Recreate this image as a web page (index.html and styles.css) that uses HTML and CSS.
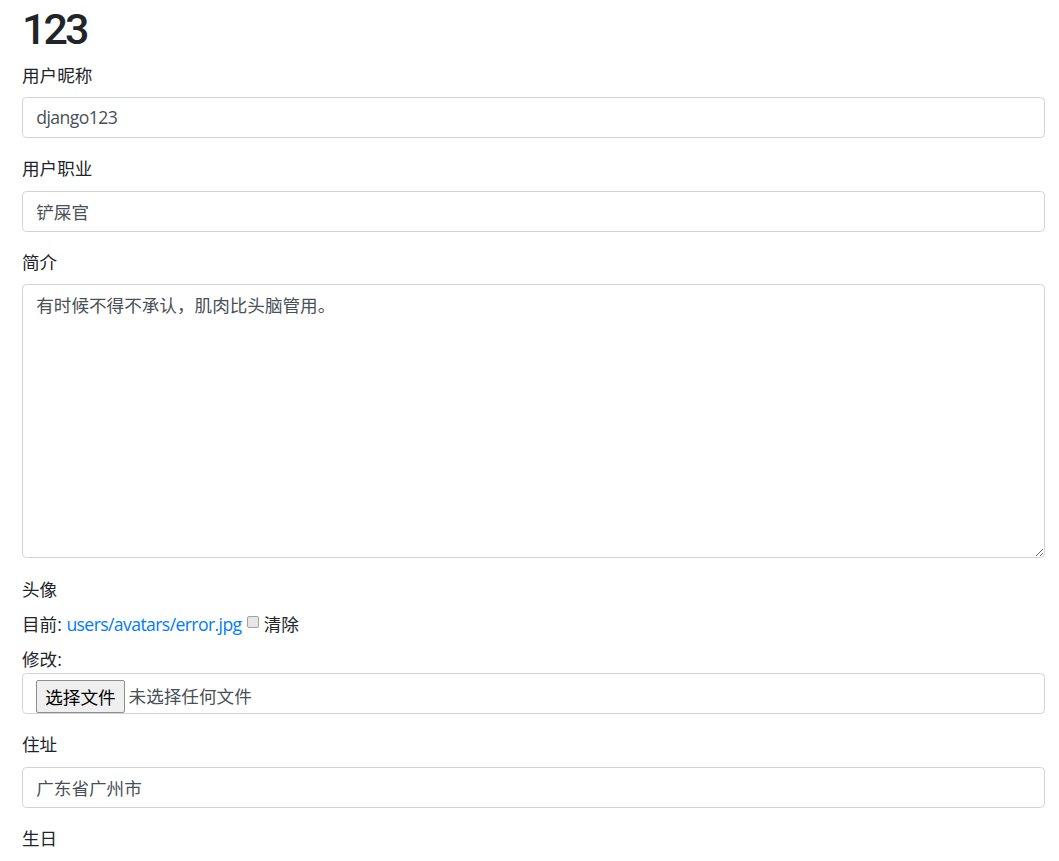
FILE: index.html
```html
<!DOCTYPE html>
<html lang="zh-CN">
<head>
<meta charset="utf-8">
<title>123</title>
<link rel="stylesheet" href="styles.css">
</head>
<body>
<main class="page">
  <h1 class="title">123</h1>
  <form class="profile-form">
    <div class="form-group">
      <label class="form-label" for="nick">用户昵称</label>
      <input class="form-control latin" id="nick" type="text" value="django123">
    </div>
    <div class="form-group">
      <label class="form-label" for="job">用户职业</label>
      <input class="form-control" id="job" type="text" value="铲屎官">
    </div>
    <div class="form-group">
      <label class="form-label" for="bio">简介</label>
      <textarea class="form-control textarea" id="bio">有时候不得不承认，肌肉比头脑管用。</textarea>
    </div>
    <div class="form-group">
      <label class="form-label">头像</label>
      <div class="current">目前: <a class="link" href="#">users/avatars/error.jpg</a> <input type="checkbox" class="clear-box" id="clear"> <label for="clear" class="clear-label">清除</label></div>
      <div class="change">修改:</div>
      <div class="form-control file-box">
        <button type="button" class="file-btn">选择文件</button>
        <span class="file-name">未选择任何文件</span>
      </div>
    </div>
    <div class="form-group">
      <label class="form-label" for="addr">住址</label>
      <input class="form-control" id="addr" type="text" value="广东省广州市">
    </div>
    <div class="form-group">
      <label class="form-label">生日</label>
    </div>
  </form>
</main>
</body>
</html>
```

FILE: styles.css
```css
html, body {
  margin: 0;
  padding: 0;
  background: #fff;
}
body {
  font-family: "Open Sans", "Noto Sans CJK SC", sans-serif;
  font-size: 17.6px;
  line-height: 26.4px;
  color: #212529;
  overflow: hidden;
}
.page {
  padding: 3px 14px 0 22px;
}
.title {
  margin: 0 0 5.8px;
  font-family: Roboto, "Open Sans", sans-serif;
  font-size: 43px;
  line-height: 52.8px;
  font-weight: 500;
  letter-spacing: -3px;
}
.profile-form {
  margin: 0;
}
.form-group {
  margin-bottom: 17.6px;
}
.form-label {
  display: block;
  margin-bottom: 8.8px;
  line-height: 26.4px;
}
.form-control {
  display: block;
  box-sizing: border-box;
  width: 100%;
  height: 41px;
  margin: 0;
  padding: 6.6px 13.2px;
  font-family: inherit;
  font-size: 17.6px;
  line-height: 26.4px;
  color: #495057;
  background: #fff;
  border: 1px solid #ced4da;
  border-radius: 4.4px;
  outline: none;
}
.latin {
  letter-spacing: -0.55px;
}
.textarea {
  height: 274px;
  resize: vertical;
}
.current {
  margin-bottom: 8.8px;
}
.link {
  color: #007bff;
  text-decoration: none;
  letter-spacing: -0.6px;
}
.clear-box {
  -webkit-appearance: none;
  appearance: none;
  box-sizing: border-box;
  display: inline-block;
  margin: 0 0 0 1px;
  width: 12px;
  height: 12px;
  vertical-align: 3px;
  background: #e6e6e6;
  border: 1px solid #a3a3a3;
  border-radius: 2px;
}
.clear-label {
  display: inline;
}
.file-box {
  display: flex;
  align-items: flex-start;
  padding-bottom: 0;
  overflow: hidden;
}
.file-btn {
  box-sizing: border-box;
  height: 33px;
  margin: 0 4px 0 0;
  padding: 0 8px;
  font-family: inherit;
  font-size: 17.6px;
  color: #000;
  background: #efefef;
  border: 1px solid #8f8f8f;
  border-radius: 2px;
}
.file-name {
  line-height: 33px;
  color: #495057;
}
```
